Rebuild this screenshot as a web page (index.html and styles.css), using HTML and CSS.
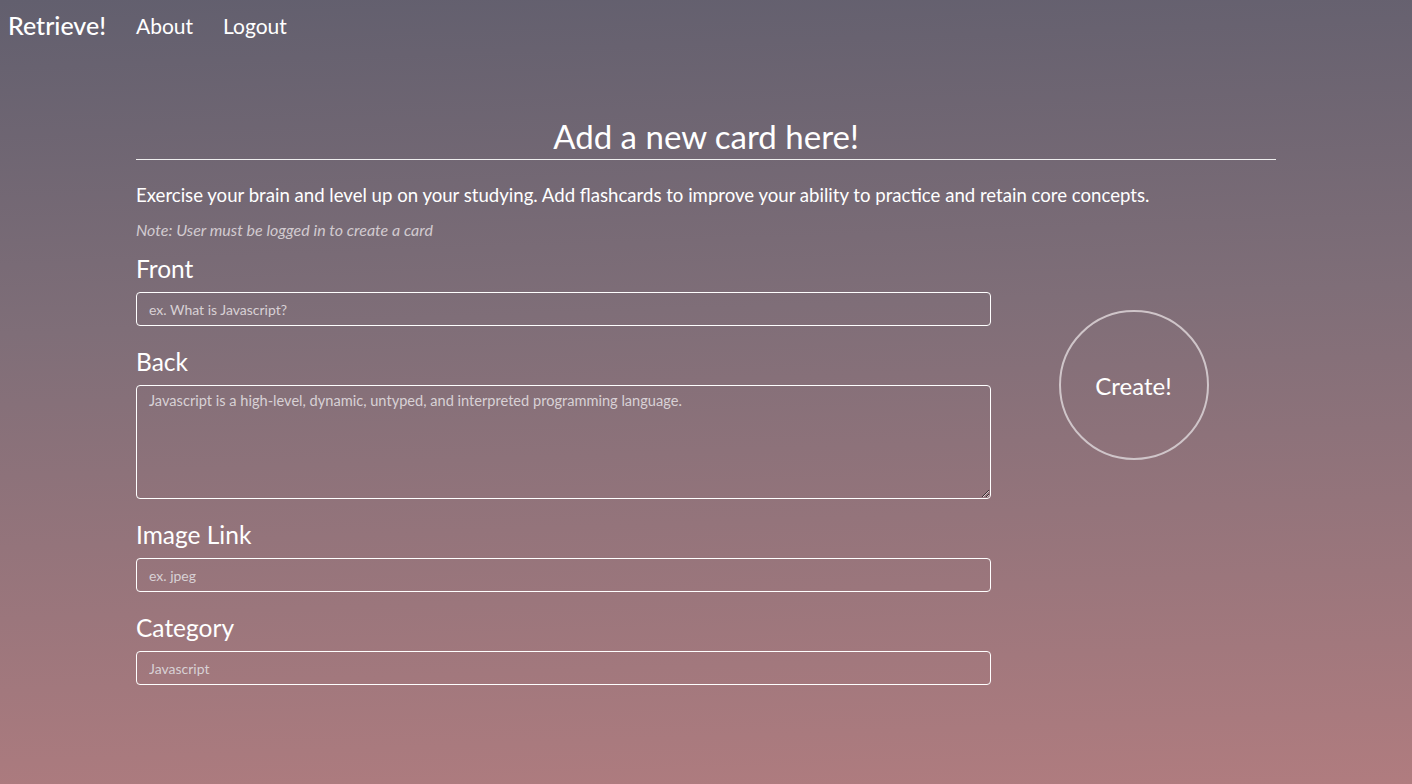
FILE: index.html
```html
<!DOCTYPE html>
<html>
<head>
<meta charset="utf-8">
<link rel="stylesheet" href="styles.css">
</head>
<body>
<nav class="navbar">
  <a class="brand" href="#">Retrieve!</a>
  <a class="nav-link" href="#">About</a>
  <a class="nav-link" href="#">Logout</a>
</nav>
<main class="container">
  <h1 class="title">Add a new card here!</h1>
  <p class="intro">Exercise your brain and level up on your studying. Add flashcards to improve your ability to practice and retain core concepts.</p>
  <p class="note">Note: User must be logged in to create a card</p>
  <div class="row">
    <form class="form-col">
      <label class="label first">Front</label>
      <input class="field" type="text" placeholder="ex. What is Javascript?">
      <label class="label">Back</label>
      <textarea class="field area" placeholder="Javascript is a high-level, dynamic, untyped, and interpreted programming language."></textarea>
      <label class="label">Image Link</label>
      <input class="field" type="text" placeholder="ex. jpeg">
      <label class="label">Category</label>
      <input class="field" type="text" placeholder="Javascript">
    </form>
    <div class="side-col">
      <button class="create" type="button">Create!</button>
    </div>
  </div>
</main>
</body>
</html>
```
FILE: styles.css
```css
html, body {
  margin: 0;
  padding: 0;
  height: 100%;
}
body {
  font-family: "Lato", "Noto Sans", sans-serif;
  color: #fff;
  background: linear-gradient(178deg, #625f6e 0%, #7f6e78 40%, #b07c7f 100%);
  min-height: 784px;
}
.navbar {
  display: flex;
  align-items: center;
  height: 50px;
  padding: 0 8px;
}
.brand {
  color: #fff;
  text-decoration: none;
  font-size: 25px;
  font-weight: 500;
  margin-right: 30px;
}
.nav-link {
  color: #fff;
  text-decoration: none;
  font-size: 21px;
  margin-right: 30px;
}
.container {
  width: 1140px;
  margin: 0 auto;
  padding-top: 66px;
}
.title {
  font-size: 33px;
  font-weight: 400;
  text-align: center;
  margin: 0;
  line-height: 40px;
  padding-bottom: 3px;
  border-bottom: 1px solid #eee;
}
.intro {
  font-size: 18.6px;
  margin: 24px 0 0;
  line-height: 22px;
}
.note {
  font-size: 16px;
  font-style: italic;
  color: #d2cbd0;
  margin: 13px 0 0;
  line-height: 22px;
}
.row {
  display: flex;
}
.form-col {
  width: 855px;
  display: flex;
  flex-direction: column;
}
.label {
  font-size: 24.5px;
  line-height: 30px;
  margin-top: 21px;
  margin-bottom: 8px;
}
.label.first {
  margin-top: 13px;
}
.field {
  box-sizing: border-box;
  height: 34px;
  border: 1px solid #fff;
  border-radius: 4px;
  background: transparent;
  color: #fff;
  font-family: inherit;
  font-size: 14px;
  padding: 6px 12px;
  outline: none;
}
.field::placeholder {
  color: #d8d1d5;
}
.area {
  height: 114px;
  resize: vertical;
  font-size: 14.6px;
}
.side-col {
  flex: 1;
  display: flex;
  justify-content: center;
  padding-top: 69px;
}
.create {
  width: 150px;
  height: 150px;
  border-radius: 50%;
  border: 2px solid #cfc5c9;
  background: transparent;
  color: #fff;
  font-family: inherit;
  font-size: 24px;
  cursor: pointer;
}
```
